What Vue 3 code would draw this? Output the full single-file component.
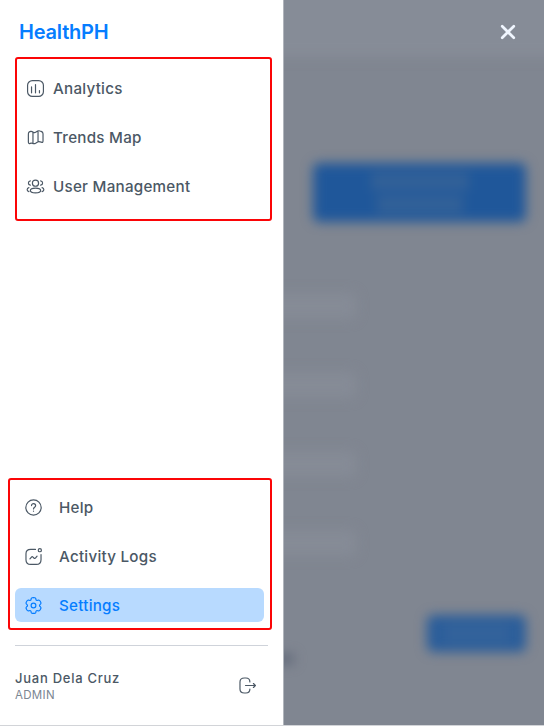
<script setup>
const mainLinks = [
  { id: 'analytics', label: 'Analytics' },
  { id: 'map', label: 'Trends Map' },
  { id: 'users', label: 'User Management' },
]
const fields = [1, 2, 3, 4]
const gearHalf =
  'M12 2C11.07 2 10.6 2 10.23 2.15C9.74 2.36 9.36 2.74 9.15 3.23C9.06 3.46 9.02 3.72 9.01 4.1C8.99 4.66 8.7 5.17 8.22 5.45C7.74 5.73 7.15 5.72 6.65 5.46C6.32 5.28 6.07 5.18 5.83 5.15C5.31 5.08 4.78 5.22 4.35 5.55C4.04 5.79 3.81 6.19 3.34 7C2.87 7.81 2.64 8.21 2.59 8.6C2.52 9.13 2.66 9.66 2.99 10.08C3.13 10.28 3.34 10.44 3.66 10.64C4.13 10.94 4.44 11.44 4.44 12C4.44 12.56 4.13 13.06 3.66 13.36C3.34 13.56 3.13 13.72 2.99 13.92C2.66 14.34 2.52 14.87 2.59 15.4C2.64 15.79 2.87 16.19 3.34 17C3.81 17.81 4.04 18.21 4.35 18.45C4.78 18.78 5.31 18.92 5.83 18.85C6.07 18.82 6.32 18.72 6.65 18.54C7.15 18.28 7.74 18.27 8.22 18.55C8.7 18.83 8.99 19.34 9.01 19.9C9.02 20.28 9.06 20.54 9.15 20.77C9.36 21.26 9.74 21.64 10.23 21.85C10.6 22 11.07 22 12 22'
</script>

<template>
  <div class="screen">
    <aside class="sidebar">
      <h1 class="brand">HealthPH</h1>
      <nav class="group main-group">
        <a v-for="link in mainLinks" :key="link.id" class="link">
          <svg v-if="link.id === 'analytics'" class="icon" viewBox="0 0 24 24">
            <rect x="2" y="2" width="20" height="20" rx="6" />
            <path d="M7 10v7.500M12 7v10.500M17 14.500v3" />
          </svg>
          <svg v-else-if="link.id === 'map'" class="icon" viewBox="0 0 24 24">
            <path d="M3 8.400c0-1.600 0-2.400.5-3 .4-.5 1.100-.7 2.500-1.100 1-.3 1.600-.1 2.700.8 1.300.9 2.300 1.100 3.500.3l2.500-1.500c1-.6 1.700-.6 3-.1l1.400.5c1.800.6 2.400 1 2.400 3v8.800c0 1.900-.5 2.300-2.200 1.700-2-.7-3.300-1.100-4.600-.2l-2.600 1.700c-1.300.8-2.200.7-3.500.2-1.400-.5-2.200-.5-3.300-.1C3.600 20 3 19.400 3 17.700zM8.800 5.200v14.500M15.200 3.900v13.500" />
          </svg>
          <svg v-else class="icon" viewBox="0 0 24 24">
            <circle cx="12" cy="7.800" r="3.900" />
            <ellipse cx="12" cy="17" rx="6.500" ry="3" />
            <path d="M5.500 4.800c-3.300.5-3.300 5 0 5.500M18.500 4.800c3.300.5 3.300 5 0 5.500M3.700 13.500c-3 .9-3 4 0 4.900M20.300 13.500c3 .9 3 4 0 4.900" />
          </svg>
          <span>{{ link.label }}</span>
        </a>
      </nav>

      <nav class="group bottom-group">
        <a class="link">
          <svg class="icon" viewBox="0 0 24 24">
            <circle cx="12" cy="12" r="9.700" />
            <path d="M9.500 9.600c0-3.400 5.200-3.200 5.200.1 0 1.900-2.700 2-2.700 4.100M12 16.400v.3" />
          </svg>
          <span>Help</span>
        </a>
        <a class="link">
          <svg class="icon" viewBox="0 0 24 24">
            <path d="M14.500 3H8.500c-4.500 0-6 1.500-6 5.500v7.500c0 4.500 1.500 6 6 6h7c4.500 0 6-1.500 6-6V9.500M7.500 15l1.700-2c.9-1 1.400-1.100 2.300-.1l1 1c.9.8 1.400.7 2.200-.3l1.800-2.100" />
            <circle cx="20" cy="4" r="2" />
          </svg>
          <span>Activity Logs</span>
        </a>
        <a class="link active">
          <svg class="icon" viewBox="0 0 24 24">
            <circle cx="12" cy="12" r="3" />
            <path :d="gearHalf" />
            <path :d="gearHalf" transform="translate(24 0) scale(-1 1)" />
          </svg>
          <span>Settings</span>
        </a>
      </nav>

      <footer class="account">
        <div>
          <div class="name">Juan Dela Cruz</div>
          <div class="role">ADMIN</div>
        </div>
        <svg class="icon logout" viewBox="0 0 24 24">
          <path d="M15 7.500C15 3.500 13.500 2.500 10 2.500H8C4 2.500 2.500 4 2.500 7.500v9C2.500 20 4 21.500 8 21.500h2c3.500 0 5-1 5-5M9.500 12h12.500M19.500 9.500l2.500 2.500-2.500 2.500" />
        </svg>
      </footer>
    </aside>

    <main class="backdrop">
      <div class="page">
        <div class="topbar"></div>
        <div class="primary"><i></i><i></i></div>
        <div class="fields">
          <div v-for="field in fields" :key="field" class="field"></div>
        </div>
        <div class="actions">
          <div class="caption"></div>
          <div class="save"><i></i></div>
        </div>
      </div>
      <svg class="close" viewBox="0 0 16 16"><path d="M2.200 2.200l11.600 11.600M13.800 2.200L2.200 13.800" /></svg>
    </main>
  </div>
</template>

<style>
body {
  margin: 0;
  background: #d2d4d8;
}
</style>

<style scoped>
* {
  box-sizing: border-box;
}
.screen {
  display: flex;
  width: 544px;
  height: 725px;
  overflow: hidden;
  font-family: Inter, sans-serif;
  color: #4b5865;
}
.sidebar {
  display: flex;
  flex-direction: column;
  width: 284px;
  padding: 0 11px 0 8px;
  background: #fff;
  border-right: 1px solid #b1b5bc;
}
.brand {
  height: 57px;
  margin: 0;
  padding: 20px 0 0 11px;
  font-size: 20px;
  font-weight: 600;
  line-height: 24px;
  letter-spacing: -0.2px;
  color: #067dff;
}
.group {
  display: flex;
  flex-direction: column;
  gap: 15px;
  border: 2px solid #fb0507;
  border-radius: 3px;
}
.main-group {
  height: 164px;
  margin-left: 7px;
  padding: 12px 0 0 9px;
}
.bottom-group {
  height: 152px;
  margin-top: 257px;
  padding: 10px 6px 0 5px;
}
.link {
  display: flex;
  align-items: center;
  gap: 8px;
  height: 34px;
  font-size: 15.200px;
  font-weight: 500;
  letter-spacing: 0.25px;
  white-space: nowrap;
}
.bottom-group .link {
  gap: 16px;
  padding-left: 9px;
  border-radius: 6px;
}
.link.active {
  color: #067dff;
  background: #b8daff;
}
.icon {
  flex: none;
  width: 19px;
  height: 19px;
  fill: none;
  stroke: currentColor;
  stroke-width: 1.5;
  stroke-linecap: round;
  stroke-linejoin: round;
  overflow: visible;
}
.account {
  display: flex;
  justify-content: space-between;
  align-items: flex-start;
  margin: 15px 4px 0 7px;
  padding: 23px 11px 0 0;
  border-top: 1px solid #cfd3da;
}
.name {
  font-size: 13px;
  font-weight: 500;
  line-height: 19px;
  letter-spacing: 0.74px;
}
.role {
  font-size: 11.500px;
  line-height: 15px;
  letter-spacing: 0.3px;
  color: #7b8692;
}
.logout {
  margin-top: 7px;
}
.backdrop {
  position: relative;
  flex: 1;
  overflow: hidden;
  background: #808691;
}
.page {
  width: 300px;
  height: 765px;
  margin: -20px 0 0 -20px;
  filter: blur(6px);
}
.topbar {
  height: 77px;
  background: #868c97;
}
.primary {
  display: flex;
  flex-direction: column;
  align-items: center;
  gap: 6px;
  width: 213px;
  height: 59px;
  margin: 106px 0 0 49px;
  padding-top: 10px;
  border-radius: 6px;
  background: #1f579a;
}
.primary i {
  width: 98px;
  height: 17px;
  background: #336198;
}
.primary i + i {
  width: 86px;
}
.fields {
  display: flex;
  flex-direction: column;
  gap: 53px;
  margin-top: 71px;
}
.field {
  width: 92px;
  height: 26px;
  border-radius: 6px;
  background: #858b96;
}
.actions {
  display: flex;
  align-items: flex-start;
  justify-content: space-between;
  width: 262px;
  margin-top: 59px;
}
.caption {
  width: 30px;
  height: 10px;
  margin-top: 39px;
  background: #626a7a;
}
.save {
  display: flex;
  align-items: center;
  justify-content: center;
  width: 99px;
  height: 37px;
  border-radius: 6px;
  background: #2a5d9a;
}
.save i {
  width: 66px;
  height: 17px;
  background: #34639b;
}
.close {
  position: absolute;
  top: 24px;
  right: 28px;
  width: 16px;
  height: 16px;
  fill: none;
  stroke: #f0f6ff;
  stroke-width: 2.7;
  stroke-linecap: round;
}
</style>
